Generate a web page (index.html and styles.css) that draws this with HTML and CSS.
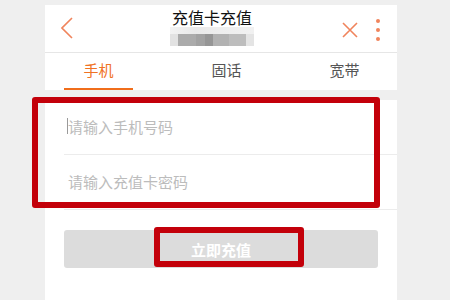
FILE: index.html
```html
<!DOCTYPE html>
<html lang="zh-CN">
  <head>
    <meta charset="UTF-8" />
    <meta name="viewport" content="width=device-width, initial-scale=1.0" />
    <title>充值卡充值</title>
    <link rel="stylesheet" href="styles.css">
  </head>
  <body>
    <div class="page">
      <div class="header">
        <button class="back">
          <svg width="12" height="22" viewBox="0 0 12 22">
            <polyline points="11,1 1,11 11,21" fill="none" stroke="#f0845c" stroke-width="1.6" />
          </svg>
        </button>
        <div class="title-box">
          <div class="title">充值卡充值</div>
          <div class="blur">
            <div class="blur-top"></div>
            <div class="blur-bottom">
              <span class="b1"></span><span class="b2"></span><span class="b3"></span><span class="b4"></span><span class="b5"></span><span class="b6"></span><span class="b7"></span>
            </div>
          </div>
        </div>
        <button class="close">
          <svg width="16" height="16" viewBox="0 0 16 16">
            <path d="M1 1 L15 15 M15 1 L1 15" fill="none" stroke="#f0845c" stroke-width="1.6" />
          </svg>
        </button>
        <div class="more">
          <span></span><span></span><span></span>
        </div>
      </div>

      <div class="tabs">
        <div class="tab active">手机</div>
        <div class="tab tab-mid">固话</div>
        <div class="tab tab-last">宽带</div>
      </div>

      <div class="form">
        <div class="field"><span class="caret"></span>请输入手机号码</div>
        <div class="field">请输入充值卡密码</div>
        <button class="submit">立即充值</button>
      </div>

      <!-- red annotation frames -->
      <div class="mark mark-form"></div>
      <div class="mark mark-btn"></div>
    </div>
  </body>
</html>
```

FILE: styles.css
```css
body {
  margin: 0;
  padding: 0;
  background: #efefef;
  font-family: "Noto Sans CJK SC", "Liberation Sans", sans-serif;
}
.page {
  position: relative;
  width: 352px;
  height: 300px;
  margin-left: 45px;
  padding-top: 5px;
  box-sizing: border-box;
}
.header {
  display: flex;
  align-items: center;
  height: 47px;
  background: white;
  border-bottom: 1px solid #e6e6e6;
}
.header button {
  background: none;
  border: none;
  padding: 0;
  display: flex;
}
.back {
  margin-left: 16px;
  margin-top: -2px;
}
.title-box {
  flex: 1;
  display: flex;
  flex-direction: column;
  align-items: center;
  margin-left: 9px;
  margin-top: -3px;
}
.title {
  font-size: 16px;
  line-height: 18px;
  color: #111;
}
.blur {
  width: 84px;
  margin-top: 1px;
}
.blur-top {
  height: 7px;
  background: linear-gradient(90deg, #f3f3f3, #e9e9e9 30%, #eeeeee 60%, #f1f1f1);
}
.blur-bottom {
  display: flex;
  height: 12px;
}
.blur-bottom span {
  height: 100%;
}
.b1 { width: 8px; background: #e2e2e2; }
.b2 { width: 18px; background: #ababab; }
.b3 { width: 9px; background: #a2a2a2; }
.b4 { width: 8px; background: #969696; }
.b5 { width: 16px; background: #b2b2b2; }
.b6 { width: 17px; background: #bdbdbd; }
.b7 { width: 8px; background: #e4e4e4; }
.close {
  margin-right: 18px;
  margin-top: 2px;
}
.more {
  display: flex;
  flex-direction: column;
  gap: 5px;
  margin-right: 17px;
  margin-top: 2px;
}
.more span {
  width: 4px;
  height: 4px;
  border-radius: 50%;
  background: #f0845c;
}
.tabs {
  display: flex;
  height: 37px;
  padding-left: 19px;
  background: white;
}
.tab {
  width: 69px;
  text-align: center;
  font-size: 15px;
  line-height: 33px;
  color: #555;
}
.tab.active {
  color: #f07224;
  border-bottom: 2px solid #f06d1b;
  box-sizing: border-box;
}
.tab-mid {
  margin-left: 59px;
}
.tab-last {
  margin-left: 49px;
}
.form {
  margin-top: 10px;
  height: 200px;
  background: white;
  padding-left: 19px;
}
.field {
  display: flex;
  align-items: center;
  height: 55px;
  padding-left: 4px;
  padding-bottom: 2px;
  box-sizing: border-box;
  border-bottom: 1px solid #ececec;
  font-size: 15px;
  color: #bcbcbc;
}
.caret {
  width: 1px;
  height: 16px;
  background: #9a9a9a;
  margin-left: -1px;
}
.submit {
  display: block;
  width: 314px;
  height: 38px;
  margin-top: 20px;
  border: none;
  border-radius: 3px;
  background: #dcdcdc;
  color: white;
  font-family: inherit;
  font-size: 15px;
  font-weight: bold;
}
.mark {
  position: absolute;
  border: 6px solid #c3000a;
  border-radius: 3px;
  box-sizing: border-box;
}
.mark-form {
  left: -13px;
  top: 97px;
  width: 348px;
  height: 111px;
}
.mark-btn {
  left: 109px;
  top: 227px;
  width: 150px;
  height: 40px;
}
```
